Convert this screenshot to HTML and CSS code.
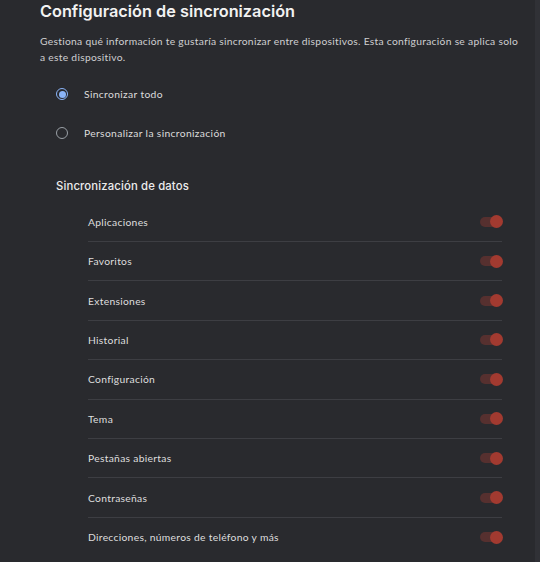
FILE: index.html
```html
<!DOCTYPE html>
<html lang="es">
<head>
<meta charset="utf-8">
<link rel="stylesheet" href="styles.css">
</head>
<body>
<div class="page">
  <main class="main">
    <h1 class="title">Configuración de sincronización</h1>
    <p class="desc">Gestiona qué información te gustaría sincronizar entre dispositivos. Esta configuración se aplica solo a este dispositivo.</p>
    <div class="radios">
      <div class="radio-row"><span class="radio checked"></span><span class="radio-label">Sincronizar todo</span></div>
      <div class="radio-row"><span class="radio"></span><span class="radio-label">Personalizar la sincronización</span></div>
    </div>
    <h2 class="section">Sincronización de datos</h2>
    <ul class="list">
      <li class="item"><span>Aplicaciones</span><span class="toggle"></span></li>
      <li class="item"><span>Favoritos</span><span class="toggle"></span></li>
      <li class="item"><span>Extensiones</span><span class="toggle"></span></li>
      <li class="item"><span>Historial</span><span class="toggle"></span></li>
      <li class="item"><span>Configuración</span><span class="toggle"></span></li>
      <li class="item"><span>Tema</span><span class="toggle"></span></li>
      <li class="item"><span>Pestañas abiertas</span><span class="toggle"></span></li>
      <li class="item"><span>Contraseñas</span><span class="toggle"></span></li>
      <li class="item"><span>Direcciones, números de teléfono y más</span><span class="toggle"></span></li>
    </ul>
  </main>
  <div class="scroll-strip"></div>
</div>
</body>
</html>
```

FILE: styles.css
```css
html, body {
  margin: 0;
  padding: 0;
  background: #292a2e;
  height: 100%;
  overflow: hidden;
}
body {
  font-family: Lato, "Open Sans", sans-serif;
  color: #e3e3e3;
}
.page {
  display: flex;
  height: 100%;
}
.main {
  flex: 1;
  padding: 0 11px 0 40px;
}
.scroll-strip {
  width: 5px;
  background: #303136;
}
.title {
  margin: 0;
  font-family: Inter, "Open Sans", sans-serif;
  font-weight: 600;
  font-size: 16.3px;
  line-height: 22px;
  color: #f2f2f2;
}
.desc {
  margin: 11px 0 0;
  font-size: 10.3px;
  line-height: 16px;
  color: #cfcfd1;
  letter-spacing: 0.28px;
}
.radios {
  margin-top: 9.5px;
  padding-left: 16px;
}
.radio-row {
  display: flex;
  align-items: center;
  height: 39px;
}
.radio {
  width: 10px;
  height: 10px;
  border: 1.5px solid #9aa0a6;
  border-radius: 50%;
  box-sizing: content-box;
  position: relative;
}
.radio.checked {
  border-color: #8ab4f8;
}
.radio.checked::after {
  content: "";
  position: absolute;
  left: 1.5px;
  top: 1.5px;
  width: 7px;
  height: 7px;
  border-radius: 50%;
  background: #8ab4f8;
}
.radio-label {
  margin-left: 16px;
  font-size: 10.3px;
  letter-spacing: 0.35px;
  color: #dcdcdc;
}
.section {
  margin: 25.5px 0 0 16px;
  font-family: Inter, "Open Sans", sans-serif;
  font-weight: 500;
  font-size: 11.3px;
  line-height: 16px;
  letter-spacing: 0.15px;
  color: #ececec;
}
.list {
  list-style: none;
  margin: 8.6px 22px 0 48px;
  padding: 0;
}
.item {
  display: flex;
  align-items: center;
  justify-content: space-between;
  height: 39.4px;
  box-sizing: border-box;
  border-bottom: 1px solid #3d3e43;
  font-size: 10.3px;
  letter-spacing: 0.3px;
  color: #dedede;
}
.item:last-child {
  border-bottom: none;
}
.toggle {
  position: relative;
  width: 22px;
  height: 10px;
  border-radius: 5px;
  background: #56302f;
}
.toggle::after {
  content: "";
  position: absolute;
  right: -1px;
  top: -1.5px;
  width: 13px;
  height: 13px;
  border-radius: 50%;
  background: #a23a30;
}
```
